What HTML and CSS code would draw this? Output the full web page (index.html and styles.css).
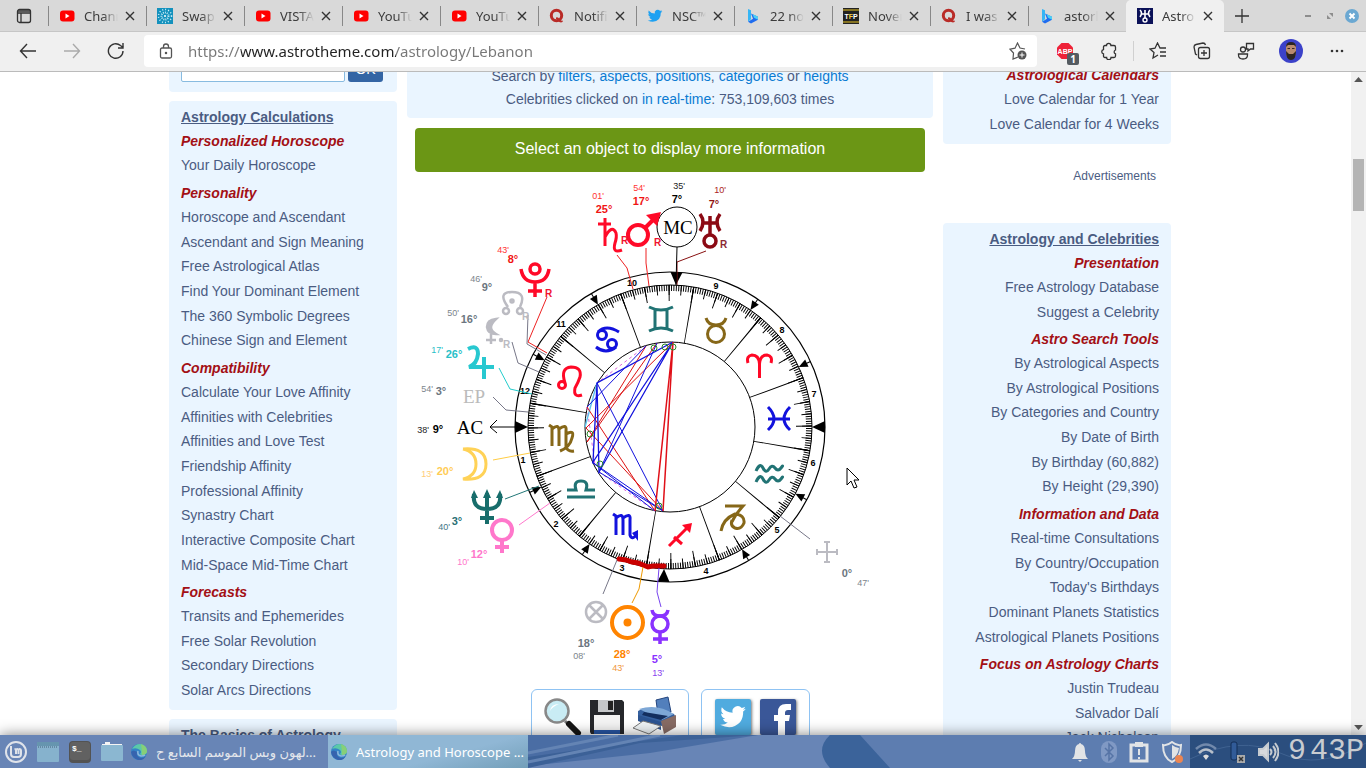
FILE: index.html
```html
<!DOCTYPE html>
<html lang="en">
<head>
    <meta charset="UTF-8">
    <meta name="viewport" content="width=device-width, initial-scale=1.0">
    <title>Astrology and Horoscope of Lebanon</title>
    <link rel="stylesheet" href="styles.css">
</head>
<body>
    <!-- shared icons -->
    <svg class="sprite" aria-hidden="true">
        <symbol id="youtube" viewBox="0 0 16 16">
            <rect x="1" y="2.500" width="14.500" height="11" rx="3" fill="#f00"/>
            <path d="M6.500 5.500v5l4-2.500z" fill="#fff"/>
        </symbol>
        <symbol id="quora" viewBox="0 0 16 16">
            <circle cx="7.500" cy="7.500" r="5.200" fill="none" stroke="#b92b27" stroke-width="3"/>
            <path d="M7 9.500q2-1 3.500 1.500t3.500 1.500q0 2-2 2-2 0-3-2t-2-1.500z" fill="#b92b27"/>
        </symbol>
        <symbol id="bing" viewBox="0 0 16 16">
            <path d="M3 1l3 1.200v9l-3 2.600z" fill="#36b6f5"/>
            <path d="M6 5.500l7 3.200v3L6 15.500l-3-1.700 5-3z" fill="#1f6df0"/>
            <path d="M7.500 6l5.500 2.700v3l-4-2z" fill="#4bd0f4"/>
        </symbol>
        <symbol id="bird" viewBox="0 0 24 24">
            <path d="M23 5q-1.300.6-2.600.7 1.500-.9 2-2.500-1.300.8-2.900 1.100A4.500 4.500 0 0 0 11.700 8.400Q6 8.200 2.400 3.700 1 7.500 3.800 9.700q-1.100 0-2-.6.200 3.600 3.600 4.500-1 .2-2 .1 1.200 3 4.200 3.100-2.800 2.200-6.600 1.900 10 5 17-2.200 3-4 2.700-9.200Q22 6.500 23 5z"/>
        </symbol>
        <symbol id="close" viewBox="0 0 10 10">
            <path d="M1 1l8 8M9 1L1 9" fill="none" stroke="#333" stroke-width="1.400"/>
        </symbol>
        <symbol id="edge" viewBox="0 0 16 16">
            <circle cx="8" cy="8" r="8" fill="#3484c6"/>
            <path d="M1 5Q4 0 9 0q7 1 7 7 0 4-5 4-2 0-2-1 2-2 0-4-4-3-8-1z" fill="#5cc9a8"/>
            <path d="M10 0q6 2 6 7 0 4-5 4 0-6-1-11z" fill="#87cf78"/>
            <path d="M6 8q-1 5 4 6 3 0 5-2-3 5-8 4-6-2-7-8 2-3 6 0z" fill="#3663ae"/>
            <path d="M7 7q-1 4 3 5 3 0 4-1" fill="none" stroke="#8fb8dc" stroke-width="1.500"/>
        </symbol>
    </svg>

    <header class="browser">
        <nav class="tabs">
            <button class="tab-menu" aria-label="Tab actions">
                <svg width="16" height="16" viewBox="0 0 16 16" fill="none" stroke="#333" stroke-width="1.300"><rect x="1.500" y="1.500" width="13" height="13" rx="2"/><path d="M1.500 5h13M2 3h12M5 5v9.500"/></svg>
            </button>
            <button class="tab"><svg class="favicon"><use href="#youtube"/></svg><span>Chann</span><svg class="close"><use href="#close"/></svg></button>
            <button class="tab"><svg class="favicon" viewBox="0 0 16 16"><path fill="#1391bd" d="M0 0h16v16H0z"/><circle cx="8" cy="8" r="6.500" fill="none" stroke="#d5f2fa" stroke-width="1.500" stroke-dasharray="1 2"/><circle cx="8" cy="8" r="3.500" fill="none" stroke="#bfe6f2" stroke-width="2" stroke-dasharray="1 1"/><circle cx="8" cy="8" r="1" fill="#fff"/></svg><span>Swap</span><svg class="close"><use href="#close"/></svg></button>
            <button class="tab"><svg class="favicon"><use href="#youtube"/></svg><span>VISTA</span><svg class="close"><use href="#close"/></svg></button>
            <button class="tab"><svg class="favicon"><use href="#youtube"/></svg><span>YouTu</span><svg class="close"><use href="#close"/></svg></button>
            <button class="tab"><svg class="favicon"><use href="#youtube"/></svg><span>YouTu</span><svg class="close"><use href="#close"/></svg></button>
            <button class="tab"><svg class="favicon"><use href="#quora"/></svg><span>Notifi</span><svg class="close"><use href="#close"/></svg></button>
            <button class="tab"><svg class="favicon" fill="#1da1f2"><use href="#bird"/></svg><span>NSC™</span><svg class="close"><use href="#close"/></svg></button>
            <button class="tab"><svg class="favicon"><use href="#bing"/></svg><span>22 no</span><svg class="close"><use href="#close"/></svg></button>
            <button class="tab"><svg class="favicon" viewBox="0 0 16 16"><path fill="#222" d="M0 0h16v16H0z"/><path fill="#e8c424" d="M0 1.500h16v1H0zM0 13.500h16v1H0z"/><text x="8" y="11" class="tfp">T<tspan fill="#f3cf3a">F</tspan>P</text></svg><span>Nover</span><svg class="close"><use href="#close"/></svg></button>
            <button class="tab"><svg class="favicon"><use href="#quora"/></svg><span>I was</span><svg class="close"><use href="#close"/></svg></button>
            <button class="tab"><svg class="favicon"><use href="#bing"/></svg><span>astorl</span><svg class="close"><use href="#close"/></svg></button>
            <button class="tab active"><svg class="favicon" viewBox="0 0 16 16"><path fill="#0b1158" d="M0 0h16v16H0z"/><path d="M3 2q3 3 0 7M13 2q-3 3 0 7M4.500 6h7M8 2v8" fill="none" stroke="#fff" stroke-width="1.600"/><circle cx="8" cy="12" r="2" fill="none" stroke="#fff" stroke-width="1.400"/></svg><span>Astro</span><svg class="close"><use href="#close"/></svg></button>
            <button class="new-tab" aria-label="New tab"><svg width="14" height="14" viewBox="0 0 14 14"><path d="M7 0v14M0 7h14" stroke="#333" stroke-width="1.300"/></svg></button>
            <div class="window-buttons">
                <button aria-label="Minimize"><svg width="14" height="14" viewBox="0 0 14 14"><path d="M4 7h6" stroke="#8d8d8d" stroke-width="2"/></svg></button>
                <button aria-label="Restore"><svg width="14" height="14" viewBox="0 0 14 14"><path d="M6 4h4v4zM4 6v4h4z" fill="#8d8d8d"/></svg></button>
                <button aria-label="Close"><svg width="14" height="14" viewBox="0 0 14 14"><circle cx="7" cy="7" r="7" fill="#6ba8d2"/><path d="M4.500 4.500l5 5M9.500 4.500l-5 5" stroke="#fff" stroke-width="2"/></svg></button>
            </div>
        </nav>

        <div class="toolbar">
            <button class="nav-button" aria-label="Back"><svg width="18" height="16" viewBox="0 0 18 16" fill="none" stroke="#333" stroke-width="1.400"><path d="M17 8H1.500M8 1L1.500 8 8 15"/></svg></button>
            <button class="nav-button" aria-label="Forward"><svg width="18" height="16" viewBox="0 0 18 16" fill="none" stroke="#aaa" stroke-width="1.400"><path d="M1 8h15.500M10 1l6.500 7-6.500 7"/></svg></button>
            <button class="nav-button" aria-label="Refresh"><svg width="18" height="18" viewBox="0 0 18 18" fill="none" stroke="#333" stroke-width="1.400"><path d="M16 9a7.300 7.300 0 1 1-2.500-5.500L16 5.500M16 1v5h-5"/></svg></button>
            <div class="address">
                <svg width="14" height="16" viewBox="0 0 14 16" fill="none" stroke="#555" stroke-width="1.300"><rect x="1.500" y="5" width="11" height="10" rx="1.500"/><path d="M4.500 5V3.500a2.500 2.500 0 0 1 5 0V5"/><circle cx="7" cy="10" r=".6" fill="#333"/></svg>
                <input type="text" aria-label="Address" value="https://www.astrotheme.com/astrology/Lebanon">
                <button aria-label="Add to favorites"><svg width="18" height="18" viewBox="0 0 18 18"><path d="M9 15l-5 2 .5-6L1 7.200l5-1L8.500 1 11 6l5 1" fill="none" stroke="#555" stroke-width="1.200"/><circle cx="13" cy="13" r="4.500" fill="#555"/><path d="M13 10.500v5M10.500 13h5" stroke="#fff"/></svg></button>
            </div>
            <button class="tool" aria-label="Adblock Plus">
                <svg width="18" height="18" viewBox="0 0 18 18"><path d="M5.500 1h7L17 5.500v7L12.500 17h-7L1 12.500v-7z" fill="#ee2238"/><text x="9" y="12" class="abp">ABP</text></svg>
                <span class="badge">1</span>
            </button>
            <button class="tool" aria-label="Extensions"><svg width="18" height="18" viewBox="0 0 18 18" fill="none" stroke="#333" stroke-width="1.300"><path d="M5 3.500h1.500a2.200 2.200 0 0 1 4.400 0h3.100q1.500 0 1.500 1.500v3a2 2 0 0 0 0 3.800V14q0 1.500-1.500 1.500h-3a2.200 2.200 0 0 1-4.400 0H5q-1.500 0-1.500-1.500v-2.200a2.200 2.200 0 0 1 0-4.300V5q0-1.500 1.500-1.500z"/></svg></button>
            <i class="separator"></i>
            <button class="tool" aria-label="Favorites"><svg width="18" height="18" viewBox="0 0 18 18" fill="none" stroke="#333" stroke-width="1.300"><path d="M9 13l-5 3 1-5.500L1 7l5-.8L8.500 1 11 6h6M11 10h6M11 14h6"/></svg></button>
            <button class="tool" aria-label="Collections"><svg width="18" height="18" viewBox="0 0 18 18" fill="none" stroke="#333" stroke-width="1.300"><path d="M4 13l-1.500-1L1 5q0-2 2-2.500L10 1q2 0 2.500 2"/><rect x="5.500" y="5.500" width="11" height="11" rx="2"/><path d="M11 8v6M8 11h6"/></svg></button>
            <button class="tool" aria-label="Feedback"><svg width="18" height="18" viewBox="0 0 18 18" fill="none" stroke="#333" stroke-width="1.300"><circle cx="6" cy="7.500" r="2.500"/><path d="M1.500 12h9v1q0 4-4.500 4t-4.500-4zM9.500 1.500h7v5.500h-3l-2.500 2V7H9.500z"/></svg></button>
            <button class="tool wide" aria-label="Profile"><svg width="24" height="24" viewBox="0 0 24 24"><circle cx="12" cy="12" r="12" fill="#3c42c9"/><path d="M7 6q5-4 10 0v6q0 8-5 8t-5-8z" fill="#b98b6f"/><path d="M7 8q0-5 5-5t5 5l-2-2H9zM7 12l3 3h4l3-3q0 9-5 9t-5-9z" fill="#2c2522"/><path d="M8.500 9.500h2.500M13 9.500h2.500M10.500 16h3" stroke="#3a2620"/></svg></button>
            <button class="tool wide" aria-label="Settings and more"><svg width="16" height="4" viewBox="0 0 16 4" fill="#333"><circle cx="3" cy="2" r="1.300"/><circle cx="8" cy="2" r="1.300"/><circle cx="13" cy="2" r="1.300"/></svg></button>
        </div>
    </header>

    <main class="viewport">
        <div class="scroller">
            <div class="page">
                <aside class="side">
                    <form class="box search">
                        <input type="text" aria-label="Search">
                        <button type="button">OK</button>
                    </form>
                    <section class="box menu">
                        <h2><a href="#">Astrology Calculations</a></h2>
                        <h3>Personalized Horoscope</h3>
                        <ul>
                            <li><a href="#">Your Daily Horoscope</a></li>
                        </ul>
                        <h3>Personality</h3>
                        <ul>
                            <li><a href="#">Horoscope and Ascendant</a></li>
                            <li><a href="#">Ascendant and Sign Meaning</a></li>
                            <li><a href="#">Free Astrological Atlas</a></li>
                            <li><a href="#">Find Your Dominant Element</a></li>
                            <li><a href="#">The 360 Symbolic Degrees</a></li>
                            <li><a href="#">Chinese Sign and Element</a></li>
                        </ul>
                        <h3>Compatibility</h3>
                        <ul>
                            <li><a href="#">Calculate Your Love Affinity</a></li>
                            <li><a href="#">Affinities with Celebrities</a></li>
                            <li><a href="#">Affinities and Love Test</a></li>
                            <li><a href="#">Friendship Affinity</a></li>
                            <li><a href="#">Professional Affinity</a></li>
                            <li><a href="#">Synastry Chart</a></li>
                            <li><a href="#">Interactive Composite Chart</a></li>
                            <li><a href="#">Mid-Space Mid-Time Chart</a></li>
                        </ul>
                        <h3>Forecasts</h3>
                        <ul>
                            <li><a href="#">Transits and Ephemerides</a></li>
                            <li><a href="#">Free Solar Revolution</a></li>
                            <li><a href="#">Secondary Directions</a></li>
                            <li><a href="#">Solar Arcs Directions</a></li>
                        </ul>
                    </section>
                    <section class="box menu">
                        <h2><a href="#">The Basics of Astrology</a></h2>
                    </section>
                </aside>

                <div class="center">
                    <div class="box intro">
                        <p>Search by <a href="#">filters</a>, <a href="#">aspects</a>, <a href="#">positions</a>, <a href="#">categories</a> or <a href="#">heights</a></p>
                        <p>Celebrities clicked on <a href="#">in real-time</a>: 753,109,603 times</p>
                    </div>
                    <button class="select-object">Select an object to display more information</button>

                    <svg class="chart" viewBox="407 172 526 517" role="img" aria-label="Birth chart">
                        <defs>
                            <g id="cusp"><path d="M155 0H148"/><path d="M142 0l9-4v8z" stroke="none"/></g>
                            <path id="angle" d="M155-6v12L142 0z" stroke="none"/>
                        </defs>

                        <!-- wheel -->
                        <g transform="translate(670 427)" fill="none" stroke="#000">
                            <circle r="155" stroke-width="1.200"/>
                            <circle r="142"/>
                            <circle r="85"/>
                            <g transform="rotate(-.57)">
                                <circle r="139" stroke-width="6" pathLength="360" stroke-dasharray=".4 .6"/>
                                <circle r="137" stroke-width="10" pathLength="360" stroke-dasharray=".4 4.600"/>
                                <circle r="134" stroke-width="16" pathLength="360" stroke-dasharray=".4 9.600"/>
                                <circle r="113.500" stroke-width="57" pathLength="360" stroke-dasharray=".5 29.500" transform="rotate(-20)"/>
                            </g>
                            <g fill="#000">
                                <use href="#cusp" transform="rotate(-120.500)"/>
                                <use href="#cusp" transform="rotate(-152)"/>
                                <use href="#cusp" transform="rotate(-55.500)"/>
                                <use href="#cusp" transform="rotate(-25)"/>
                                <use href="#cusp" transform="rotate(59.500)"/>
                                <use href="#cusp" transform="rotate(28)"/>
                                <use href="#cusp" transform="rotate(124.500)"/>
                                <use href="#cusp" transform="rotate(155)"/>
                                <use href="#angle"/>
                                <use href="#angle" transform="rotate(180)"/>
                                <use href="#angle" transform="rotate(-87.600)"/>
                                <use href="#angle" transform="rotate(92.400)"/>
                            </g>
                        </g>
                        <path class="thick" d="M619 559l7 1 6 2 6 1 10 4 5-1h11"/>

                        <g class="house">
                            <text x="523" y="463">1</text><text x="556" y="527">2</text><text x="622" y="571">3</text>
                            <text x="706" y="574">4</text><text x="777" y="533">5</text><text x="813" y="466">6</text>
                            <text x="814" y="397">7</text><text x="782" y="333">8</text><text x="716" y="289">9</text>
                            <text x="632" y="286">10</text><text x="561" y="327">11</text><text x="525" y="394">12</text>
                        </g>

                        <!-- aspects -->
                        <g class="aspects">
                            <path stroke="#d6d" stroke-dasharray="3 3" d="M646 346L597 383M587 407L595 465M599 472L655 511"/>
                            <path stroke="#5cc0ee" stroke-width="1.400" d="M597 383L585 427"/>
                            <path stroke="#d11" d="M646 346L587 442M657 343L587 442M673 342L586 428M587 407L655 511M586 428L663 511"/>
                            <path stroke="#11d" d="M646 346L587 407M657 343L599 472M597 383L663 511M592 462L663 511M592 462L655 511M599 472L663 511"/>
                            <path stroke="#11d" stroke-width="1.300" d="M673 342L597 383L593 462L673 342L599 472L597 383"/>
                            <path stroke="#e01018" stroke-width="1.500" d="M655 511L673 342L663 511"/>
                            <g stroke="#2a8a2a"><circle cx="654" cy="348" r="3"/><circle cx="665" cy="347" r="3"/><circle cx="673" cy="347" r="3"/><circle cx="590" cy="434" r="3"/><circle cx="600" cy="464" r="3"/><circle cx="659" cy="506" r="3"/></g>
                        </g>

                        <!-- lines from the wheel to the planets -->
                        <g fill="none" stroke-width="1">
                            <path stroke="#e22" d="M617 255l10 13 6 21M646 248v15l3 23M547 297l-19 45 19 11"/>
                            <path stroke="#811" d="M706 251l-29 11v23"/>
                            <path stroke="#000" d="M677 247l-1 38M515 427h-25M497 420l-7 7 7 6"/>
                            <circle cx="677" cy="227" r="20" stroke="#000"/>
                            <path stroke="#778" d="M528 315l-1 29 19 11M512 342l6 21 21 9M493 397l13 13 22 2M603 594l14-34M810 539l-30-23"/>
                            <path stroke="#2cc" d="M499 368l11 21 22 5"/>
                            <path stroke="#fc4" d="M493 460l37-7"/>
                            <path stroke="#277" d="M505 499l34-13"/>
                            <path stroke="#f7c" d="M519 525l31-22"/>
                            <path stroke="#e90" d="M632 603l7-14 4-22"/>
                            <path stroke="#74e" d="M661 607l-4-15 2-24"/>
                        </g>

                        <!-- signs -->
                        <g class="sign">
                            <path class="air" d="M649 307q12 6 24 0M649 331q12-6 24 0M655 309v20M667 309v20"/>
                            <path class="earth" d="M706 318q2 7 10 7t10-7"/><circle class="earth" cx="716" cy="334" r="8.500"/>
                            <path class="fire" d="M748 363q-2-7 4-8 7 0 7.500 9v14v-14q.5-9 7.500-9 6 1 4 8"/>
                            <path class="water" d="M768 407q12 12 0 23M790 407q-12 12 0 23M768 419h22"/>
                            <path class="air wave" d="M756 471q4-9 7-3t6 1 6-1 6 0 0 0M756 482q4-9 7-3t6 1 6-1 6 0 0 0"/>
                            <path class="earth" d="M725 506h18q-8 9-11 16M721 531q2-12 14-17 10 1 9 9-3 7-9 5-5-2-3-8"/>
                            <path class="fire" d="M669 546l20-20M674 537l8 7"/><path d="M692 523l-2 10-8-8z" fill="#ff0826"/>
                            <path class="water" d="M613 514l3 2v19M616 518q7-6 7 2v15M623 518q8-6 7 2v15q2 6 7-1"/><path d="M638 530v11l-6-8z" fill="#1212dd"/>
                            <path class="air" d="M567 497h28M567 490h9q-3-9 5-9t5 9h9"/>
                            <path class="earth" d="M549 425l3 2v19M552 429q7-6 7 2v15M559 429q8-6 7 2v16q2 5 8 4M566 434q9-5 6 4-2 9-12 13"/>
                            <circle class="fire" cx="562" cy="385" r="3.500"/><path class="fire" d="M565 383q-5-15 6-16 11 0 9 10-2 6-5 11-2 10 7 7"/>
                            <circle class="water" cx="602" cy="335" r="4.500"/><circle class="water" cx="612" cy="344" r="4.500"/><path class="water" d="M598 332q8-8 21 0M616 347q-10 8-20 0"/>
                        </g>

                        <!-- planets -->
                        <g class="planet">
                            <g stroke="#ff0a28">
                                <path d="M605 218v28M598 224h13M605 237q7-13 11-4 1 4-1 10-3 11 7 7" stroke-width="3"/>
                                <circle cx="638" cy="235" r="10"/><path d="M645 228l9-9"/><path d="M661 212l-4 14-11-11z" fill="#ff0a28" stroke="none"/>
                                <g stroke-width="3.500"><circle cx="535" cy="269" r="5"/><path d="M521 269q2 13 14 13t14-13M535 282v15M528 291h14"/></g>
                            </g>
                            <g stroke="#8c0a14" stroke-width="3.500"><path d="M700 214q6 8 0 17M720 214q-6 8 0 17M703 223h15M710 216v18"/><circle cx="710" cy="241" r="6"/></g>
                            <g stroke="#bbbbc2" stroke-width="2.500">
                                <path d="M508 307q-11-15 4-15t8 15"/><circle cx="506" cy="311" r="3"/><circle cx="520" cy="311" r="3"/><circle cx="512" cy="301" r="1.500"/>
                                <path d="M496 319q-9 1-9 8 1 7 9 7-10-6 0-15z" fill="#bbbbc2"/><path d="M491 334v10M486 340h10"/><circle cx="501" cy="340" r="1"/>
                                <circle cx="596" cy="612" r="10"/><path d="M589 605l14 14M603 605l-14 14"/>
                            </g>
                            <path stroke="#bbbbc2" stroke-width="2" d="M827 542v20M817 552h20M824 542h6M824 562h6M817 549v6M837 549v6"/>
                            <path stroke="#28c8d0" d="M468 349q10-5 10 5-1 10-9 13h25M484 357v22"/>
                            <path stroke="#ffd257" stroke-width="3" d="M463 449q13 3 13 15t-13 15q23 2 23-15t-23-15"/>
                            <path stroke="#176d6b" d="M474 494q-2 15 13 15t13-15M487 493v31M480 518h14"/><path fill="#176d6b" d="M471 498l3-8 4 8zM483 498l4-9 4 9zM496 498l4-8 3 8z"/>
                            <g stroke="#ff77cb"><circle cx="502" cy="530" r="10"/><path d="M502 540v13M495 547h14"/></g>
                            <circle cx="627.500" cy="622.500" r="15.500" stroke="#ff8400"/><circle cx="627.500" cy="622.500" r="4" fill="#ff8400" stroke="none"/>
                            <g stroke="#8a32ff" stroke-width="3.500"><circle cx="660" cy="624" r="8"/><path d="M652 610q1 6 8 6t8-6M660 632v12M653 639h15"/></g>
                        </g>
                        <g class="point"><text x="678" y="234">MC</text><text x="470" y="434">AC</text><text x="474" y="403" fill="#bbb">EP</text></g>
                        <g class="retro"><text x="621" y="244">R</text><text x="654" y="246">R</text><text x="545" y="297">R</text><text x="720" y="248" fill="#8c2a34">R</text><g fill="#bbbbc2"><text x="522" y="320">R</text><text x="503" y="348">R</text></g></g>

                        <g class="degree">
                            <g fill="#f01414"><text x="604" y="213">25°</text><text x="641" y="205">17°</text><text x="513" y="263">8°</text></g>
                            <text x="677" y="203" fill="#000">7°</text><text x="714" y="208" fill="#901414">7°</text>
                            <g fill="#6c7680"><text x="487" y="291">9°</text><text x="469" y="323">16°</text><text x="441" y="395">3°</text><text x="586" y="647">18°</text><text x="847" y="577">0°</text></g>
                            <text x="454" y="358" fill="#28c0c8">26°</text><text x="438" y="433" fill="#000">9°</text>
                            <text x="445" y="475" fill="#fc5">20°</text><text x="457" y="525" fill="#276f74">3°</text>
                            <text x="479" y="558" fill="#ff77cb">12°</text><text x="622" y="658" fill="#ff8400">28°</text><text x="657" y="663" fill="#8a32ff">5°</text>
                        </g>
                        <g class="minute">
                            <g fill="#f33"><text x="598" y="199">01'</text><text x="639" y="191">54'</text><text x="503" y="253">43'</text></g>
                            <text x="679" y="189" fill="#222">35'</text><text x="720" y="193" fill="#a22">10'</text>
                            <g fill="#7c858c"><text x="476" y="282">46'</text><text x="453" y="316">50'</text><text x="427" y="392">54'</text><text x="579" y="659">08'</text><text x="863" y="586">47'</text></g>
                            <text x="437" y="353" fill="#28c0c8">17'</text><text x="423" y="433" fill="#222">38'</text>
                            <text x="427" y="477" fill="#fc7">13'</text><text x="444" y="530" fill="#478">40'</text>
                            <text x="463" y="565" fill="#ff77cb">10'</text><text x="618" y="671" fill="#f0973c">43'</text><text x="658" y="676" fill="#8a42ef">13'</text>
                        </g>
                        <!-- pointer -->
                        <path d="M847 468v17l4-4 3 7 3-1-3-7h5z" fill="#fff" stroke="#000"/>
                    </svg>

                    <div class="actions">
                        <div class="action-box">
                            <button aria-label="Zoom"><svg width="40" height="40" viewBox="0 0 40 40"><path d="M23 25l5 5" stroke="#777" stroke-width="3"/><path d="M27 28l9 9" stroke="#151515" stroke-width="6" stroke-linecap="round"/><circle cx="15" cy="15" r="11.500" fill="#c9ecf4" stroke="#888" stroke-width="2.500"/><path d="M8 15q1-7 9-7-7 3-9 7z" fill="#fff"/></svg></button>
                            <button aria-label="Save"><svg width="40" height="40" viewBox="0 0 40 40"><path d="M3 4h32l2 2v32H4l-1-2z" fill="#25272b"/><path d="M11 4h16v12H11z" fill="#c5c7c9"/><path d="M21 5h5v9h-5z" fill="#222"/><path d="M7 19h26v15H7z" fill="#f3f3f3"/><path d="M7 34h26v4H7z" fill="#2856a4"/></svg></button>
                            <button aria-label="Print"><svg width="46" height="40" viewBox="0 0 46 40"><path d="M24 4l12-3 3 15-13 3z" fill="#527fbc" stroke="#24457e"/><path d="M6 15l6-3 30 6 2 4-14 8L6 24z" fill="#35609f"/><path d="M7 13q18-6 35 5l-12 6z" fill="#7da7d6"/><path d="M12 16l24 4-7 4-19-5z" fill="#132e5e"/><path d="M6 19l23 7v8L6 25z" fill="#2b5390"/><path d="M29 25l15-6v12l-12 7z" fill="#876b64"/><path d="M11 25l18 5-12 8L1 32z" fill="#eef3f5" stroke="#777"/></svg></button>
                        </div>
                        <div class="action-box share">
                            <button class="twitter" aria-label="Share on Twitter"><svg width="28" height="28" viewBox="0 0 24 24" fill="#fff"><use href="#bird"/></svg></button>
                            <button class="facebook" aria-label="Share on Facebook"><svg width="36" height="36" viewBox="0 0 36 36"><path d="M18 36V22h-4v-6h4v-3q0-8 8-8h5v6h-3q-3 0-3 3v2h5l-1 6h-4v14z" fill="#fff"/></svg></button>
                        </div>
                    </div>
                </div>

                <aside class="side right">
                    <section class="box menu calendars">
                        <h3>Astrological Calendars</h3>
                        <ul>
                            <li><a href="#">Love Calendar for 1 Year</a></li>
                            <li><a href="#">Love Calendar for 4 Weeks</a></li>
                        </ul>
                    </section>
                    <p class="ads">Advertisements</p>
                    <section class="box menu">
                        <h2><a href="#">Astrology and Celebrities</a></h2>
                        <h3>Presentation</h3>
                        <ul>
                            <li><a href="#">Free Astrology Database</a></li>
                            <li><a href="#">Suggest a Celebrity</a></li>
                        </ul>
                        <h3>Astro Search Tools</h3>
                        <ul>
                            <li><a href="#">By Astrological Aspects</a></li>
                            <li><a href="#">By Astrological Positions</a></li>
                            <li><a href="#">By Categories and Country</a></li>
                            <li><a href="#">By Date of Birth</a></li>
                            <li><a href="#">By Birthday (60,882)</a></li>
                            <li><a href="#">By Height (29,390)</a></li>
                        </ul>
                        <h3>Information and Data</h3>
                        <ul>
                            <li><a href="#">Real-time Consultations</a></li>
                            <li><a href="#">By Country/Occupation</a></li>
                            <li><a href="#">Today's Birthdays</a></li>
                            <li><a href="#">Dominant Planets Statistics</a></li>
                            <li><a href="#">Astrological Planets Positions</a></li>
                        </ul>
                        <h3>Focus on Astrology Charts</h3>
                        <ul>
                            <li><a href="#">Justin Trudeau</a></li>
                            <li><a href="#">Salvador Dalí</a></li>
                            <li><a href="#">Jack Nicholson</a></li>
                        </ul>
                    </section>
                </aside>
            </div>
        </div>
        <div class="scrollbar"><i class="up"></i><i class="thumb"></i><i class="down"></i></div>
    </main>

    <footer class="taskbar">
        <svg class="wallpaper" viewBox="0 0 1366 33" preserveAspectRatio="none">
            <path fill="#6885b6" d="M0 0h1366v33H0z"/>
            <path fill="#4a6da4" d="M528 0h230L650 18l-122 13z"/>
            <path fill="#3c6197" d="M640 8l118-8h-75L528 22v11z"/>
            <path stroke="#6484b4" stroke-width="3" d="M528 18l90-18M528 27L660 0"/>
            <path fill="#3b639a" d="M830 0q-16 15 0 33h80L880 0z"/>
            <path fill="#5d7db0" d="M860 0h330v33H890z"/>
            <path fill="#2b4e7e" d="M1190 0h176v33h-176z"/>
            <path stroke="#3f6291" d="M1190 24q50-24 90-6t86-10" fill="none"/>
        </svg>
        <nav class="launchers">
            <button aria-label="Menu"><svg width="22" height="22" viewBox="0 0 22 22" fill="none" stroke="#dfe3ea" stroke-width="2"><circle cx="11" cy="11" r="10"/><path d="M6 5v8q0 3 3 3h4q3 0 3-3V9.500q0-1.500-1.200-1.500t-1.300 1.500V13M13.500 9.500q0-1.500-1.200-1.500T11 9.500V13M11 9.500Q11 8 9.500 8"/></svg></button>
            <button aria-label="Show desktop"><svg width="22" height="20" viewBox="0 0 22 20"><rect width="22" height="20" rx="1" fill="#86b2cd"/><path fill="#6695af" d="M0 0h22v4H0z"/><path stroke="#44627b" d="M1 5h20" stroke-dasharray="1 1"/></svg></button>
            <button aria-label="Terminal"><svg width="22" height="22" viewBox="0 0 22 22"><rect width="22" height="22" rx="4" fill="#535353"/><rect x="1" y="1" width="20" height="18" rx="3" fill="#616161"/><text x="3" y="10" class="prompt">$_</text></svg></button>
            <button aria-label="Files"><svg width="22" height="20" viewBox="0 0 22 20"><path fill="#f4f4f4" d="M1 4V2h3V0h5v2h12v2z"/><rect y="3" width="22" height="16" rx="1" fill="#8bb7d1"/></svg></button>
        </nav>
        <button class="task"><svg class="favicon"><use href="#edge"/></svg><span dir="rtl" lang="ar">...لهون وبس الموسم السابع ح</span></button>
        <button class="task current"><svg class="favicon"><use href="#edge"/></svg><span>Astrology and Horoscope ...</span></button>
        <div class="tray">
            <svg width="18" height="22" viewBox="0 0 18 22" fill="#e2e4e6"><path d="M1 18q3-3 3-8 0-6 4-7a1 1 0 0 1 2 0q4 1 4 7 0 5 3 8zM7 19h4l-2 2z"/></svg>
            <svg width="16" height="22" viewBox="0 0 16 22"><rect width="16" height="22" rx="8" fill="#8099c4"/><path d="M4 7l8 8-4 4V3l4 4-8 8" fill="none" stroke="#5674a6" stroke-width="1.500"/></svg>
            <svg width="20" height="22" viewBox="0 0 20 22"><path d="M2 4h16v16H2z" fill="none" stroke="#e2e4e6" stroke-width="3"/><path d="M6 1h8v5H6zM9 8h2v6H9zM9 16h2v2H9z" fill="#e2e4e6"/></svg>
            <svg width="22" height="22" viewBox="0 0 22 22"><path d="M11 1q5 4 9 3 0 13-9 17Q2 17 2 4q4 1 9-3z" fill="none" stroke="#e2e4e6" stroke-width="2"/><path d="M11 4q4 3 7 3-1 8-7 11z" fill="#e2e4e6"/><circle cx="18" cy="18" r="4" fill="#eb8552"/></svg>
            <svg width="22" height="22" viewBox="0 0 22 22" fill="none" stroke-width="2.500"><path d="M1 8q10-9 20 0" stroke="#7189ac"/><path d="M4 12q7-7 14 0" stroke="#b7bfca"/><path d="M8 15q3-3 6 0l-3 4z" fill="#ddd"/></svg>
            <svg width="16" height="22" viewBox="0 0 16 22"><rect x="2" y="1" width="6" height="18" rx="2" fill="#315b98" stroke="#132e56"/><path d="M8 14h8v8H8z" fill="#aaa"/><path d="M10 16l4 4M14 16l-4 4" stroke="#333" stroke-width="1.500"/></svg>
            <svg width="22" height="22" viewBox="0 0 22 22" fill="none" stroke="#c6cbd0" stroke-width="2"><path d="M2 8h4l5-5v16l-5-5H2z" fill="#d8dadd"/><path d="M13 8q3 3 0 6M16 5q5 6 0 12M18 2q7 9 0 18"/></svg>
        </div>
        <time class="clock"><span>9</span><span>43P</span></time>
    </footer>
</body>
</html>
```
FILE: styles.css
```css
* {
    box-sizing: border-box;
}
body {
    margin: 0;
    height: 100vh;
    display: flex;
    flex-direction: column;
    overflow: hidden;
    background-color: #fff;
    color: #4a5c82;
    font-family: "Liberation Sans", Arial, sans-serif;
    font-size: 14px;
}
button {
    display: flex;
    align-items: center;
    justify-content: center;
    padding: 0;
    border: none;
    background: none;
    color: inherit;
    font: inherit;
    cursor: pointer;
}
svg {
    flex: none;
}
h2, h3, p, ul {
    margin: 0;
    padding: 0;
    font-size: 14px;
}
a {
    text-decoration: none;
}
.sprite {
    position: absolute;
    width: 0;
    height: 0;
}

/* browser window */
.browser {
    flex: none;
    border-bottom: 1px solid #bbb;
    background-color: #f0f0f0;
    color: #3c3c3c;
    font-family: "Noto Sans", sans-serif;
}
.tabs {
    display: flex;
    height: 32px;
    background-color: #d9d9d9;
    border-bottom: 1px solid #c6c6c6;
}
.tab-menu {
    width: 48px;
}
.tab {
    position: relative;
    width: 98px;
    padding-left: 11px;
    justify-content: flex-start;
    font-size: 13px;
}
.tab::before {
    content: "";
    position: absolute;
    left: 0;
    top: 6px;
    width: 1px;
    height: 20px;
    background-color: #888;
}
.tab span {
    width: 34px;
    margin: 0 7px 0 9px;
    overflow: hidden;
    white-space: nowrap;
    text-align: left;
    mask-image: linear-gradient(to right, #000 55%, transparent);
}
.tab.active {
    height: 32px;
    background-color: #f0f0f0;
    border-radius: 5px 5px 0 0;
}
.tab.active::before {
    display: none;
}
.favicon {
    width: 16px;
    height: 16px;
}
.close {
    width: 10px;
    height: 10px;
}
.new-tab {
    width: 36px;
}
.window-buttons {
    display: flex;
    gap: 8px;
    margin-left: auto;
    padding-right: 7px;
}
.tfp, .abp {
    font: bold 7px "Liberation Sans", sans-serif;
    fill: #fff;
    text-anchor: middle;
}
.toolbar {
    display: flex;
    align-items: center;
    height: 39px;
    padding: 0 6px 1px;
}
.nav-button {
    width: 44px;
    height: 32px;
}
.address {
    flex: 1;
    display: flex;
    align-items: center;
    height: 32px;
    margin: 0 6px;
    padding: 0 10px 0 15px;
    border-radius: 4px;
    background-color: #fff;
}
.address input {
    flex: 1;
    margin-left: 15px;
    padding: 0;
    border: none;
    outline: none;
    font: 15px "Noto Sans", sans-serif;
    /* the host name is darker than the rest of the URL */
    color: transparent;
    background: linear-gradient(to right, #777 53px, #222 53px, #222 208px, #777 208px);
    background-clip: text;
}
.tool {
    position: relative;
    width: 44px;
    height: 32px;
}
.tool.wide {
    width: 46px;
}
.badge {
    position: absolute;
    right: 8px;
    bottom: 2px;
    width: 12px;
    background-color: #555b61;
    border-radius: 2px;
    color: #fff;
    font-size: 10px;
    font-weight: bold;
    line-height: 12px;
}
.separator {
    width: 1px;
    height: 20px;
    margin: 0 2px;
    background-color: #d0d0d0;
}

/* web page, scrolled a little way down */
.viewport {
    flex: 1;
    min-height: 0;
    display: flex;
    overflow: hidden;
}
.scroller {
    flex: 1;
    padding-right: 11px;
}
.page {
    display: flex;
    gap: 10px;
    max-width: 1002px;
    margin: -20px auto 0;
}
.scrollbar {
    display: flex;
    flex-direction: column;
    align-items: center;
    width: 15px;
    padding: 5px 0;
    background-color: #f1f1f1;
}
.scrollbar i {
    width: 11px;
}
.scrollbar .thumb {
    height: 52px;
    margin: 77px 0 auto;
    background-color: #b4b4b4;
}
.scrollbar .up {
    height: 5px;
    background-color: #555;
    clip-path: polygon(50% 0, 90% 100%, 10% 100%);
}
.scrollbar .down {
    height: 5px;
    background-color: #555;
    clip-path: polygon(50% 100%, 90% 0, 10% 0);
}
.side {
    width: 228px;
    display: flex;
    flex-direction: column;
    gap: 9px;
}
.box {
    flex: none;
    background-color: #eaf5ff;
    border-radius: 4px;
}
.search {
    display: flex;
    align-items: flex-end;
    gap: 3px;
    height: 40px;
    padding: 0 14px 10px 12px;
}
.search input {
    width: 164px;
    height: 26px;
    border: 1px solid #88bbe0;
    border-radius: 2px;
}
.search button {
    width: 36px;
    height: 26px;
    border-radius: 3px;
    background-color: #3465a4;
    color: #fff;
}
.menu {
    padding: 4px 12px 7px;
}
.menu a {
    color: #4a5c82;
}
.menu h2 {
    height: 24px;
    line-height: 24px;
}
.menu h2 a {
    text-decoration: underline;
}
.menu h3 {
    height: 24px;
    margin-top: 3px;
    line-height: 24px;
    color: #a31015;
    font-style: italic;
}
.menu h2 + h3 {
    margin-top: 0;
}
.menu ul {
    list-style: none;
}
.menu li {
    height: 25px;
    line-height: 25px;
}
.menu li:nth-child(3n + 2) {
    height: 24px;
}
.right {
    gap: 0;
    text-align: right;
}
.calendars {
    height: 92px;
    padding-top: 8px;
}
.ads {
    flex: none;
    height: 79px;
    padding: 24px 15px;
    font-size: 12px;
    line-height: 16px;
}
.center {
    flex: 1;
}
.intro {
    height: 66px;
    padding-top: 13px;
    line-height: 23px;
    text-align: center;
}
.intro a {
    color: #0b7bd2;
}
.select-object {
    width: calc(100% - 16px);
    height: 44px;
    margin: 10px 8px 0;
    padding-bottom: 3px;
    border-radius: 4px;
    background-color: #6b9615;
    color: #fff;
    font-size: 16px;
}

/* birth chart */
.chart {
    display: block;
    width: 100%;
    font-family: "Liberation Sans", Arial, sans-serif;
    text-anchor: middle;
}
.thick {
    fill: none;
    stroke: #c90000;
    stroke-width: 5;
    stroke-linecap: round;
}
.house {
    font-size: 9px;
    font-weight: bold;
}
.aspects {
    fill: none;
}
.sign {
    stroke-width: 3;
}
.fire, .earth, .air, .water {
    fill: none;
}
.fire {
    stroke: #ff0826;
}
.earth {
    stroke: #866718;
}
.air {
    stroke: #217374;
}
.water {
    stroke: #1212dd;
}
.planet {
    fill: none;
    stroke-width: 4;
}
.point {
    font-family: "Liberation Serif", serif;
    font-size: 19px;
}
.retro {
    fill: #f01430;
    font-size: 10px;
    font-weight: bold;
    text-anchor: start;
}
.degree {
    font-size: 11px;
    font-weight: bold;
}
.minute {
    font-size: 9px;
}
.actions {
    display: flex;
    justify-content: center;
    gap: 12px;
}
.action-box {
    display: flex;
    gap: 5px;
    height: 60px;
    padding: 6px 10px;
    border: 1px solid #8fc3f3;
    border-radius: 6px;
}
.action-box.share {
    gap: 9px;
    padding: 9px 13px;
}
.action-box button {
    height: 40px;
}
.action-box .twitter, .action-box .facebook {
    width: 36px;
    height: 36px;
    border-radius: 2px;
    background-color: #50abdf;
    box-shadow: 1px 1px 3px #777;
}
.action-box .facebook {
    background-color: #3a5798;
}

/* desktop panel */
.taskbar {
    position: relative;
    z-index: 1;
    flex: none;
    display: flex;
    align-items: center;
    height: 33px;
    box-shadow: 0 0 14px rgba(0, 0, 0, 0.5);
    color: #e4e7ec;
}
.wallpaper {
    position: absolute;
    z-index: -1;
    width: 100%;
    height: 100%;
}
.launchers {
    display: flex;
    gap: 10px;
    padding: 0 5px;
}
.task {
    justify-content: flex-start;
    gap: 9px;
    width: 200px;
    height: 33px;
    padding-left: 3px;
    font-family: "Noto Sans", "DejaVu Sans", sans-serif;
    font-size: 13px;
    white-space: nowrap;
}
.task.current {
    background: linear-gradient(165deg, #90b7d5 60%, #739fb9);
    color: #fff;
}
.tray {
    display: flex;
    align-items: center;
    gap: 12px;
    margin-left: auto;
    padding-right: 3px;
}
.clock {
    display: flex;
    gap: 4px;
    padding: 0 2px 0 6px;
    color: #c9ccd0;
    font-family: "Liberation Mono", monospace;
    font-size: 30px;
    line-height: 33px;
}
.prompt {
    fill: #fff;
    font: bold 8px "Liberation Mono", monospace;
}
```
